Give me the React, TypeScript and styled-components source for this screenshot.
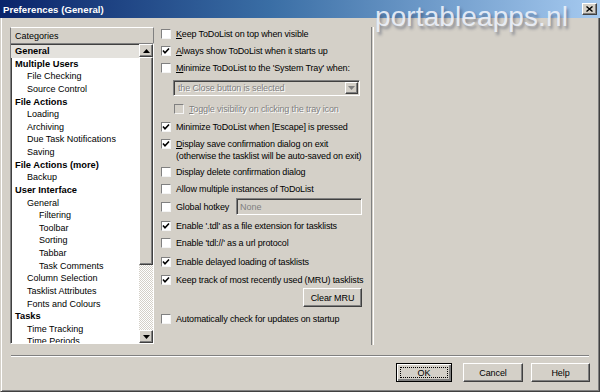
import * as React from 'react';
import styled, { createGlobalStyle, css } from 'styled-components';

const GlobalStyle = createGlobalStyle`
    html, body {
        margin: 0;
        padding: 0;
        background: #d4d0c8;
    }
    body {
        font-family: "Liberation Sans", Arial, sans-serif;
        font-size: 9px;
        color: #000;
    }
`;

const raised = css`
    background: #d4d0c8;
    border-top: 1px solid #ffffff;
    border-left: 1px solid #ffffff;
    border-right: 1px solid #404040;
    border-bottom: 1px solid #404040;
    box-shadow: inset -1px -1px 0 #808080;
`;

const sunken = css`
    border-top: 1px solid #808080;
    border-left: 1px solid #808080;
    border-right: 1px solid #ffffff;
    border-bottom: 1px solid #ffffff;
    box-shadow: inset 1px 1px 0 #404040;
`;

const disabledText = css`
    color: #808080;
    text-shadow: 1px 1px 0 #ffffff;
`;

const Window = styled.div`
    position: relative;
    width: 600px;
    height: 392px;
    display: flex;
    flex-direction: column;
    overflow: hidden;
    background: #d4d0c8;
`;

const TitleBar = styled.div`
    height: 18px;
    display: flex;
    align-items: center;
    justify-content: space-between;
    padding: 0 3px 0 3px;
    background: linear-gradient(to right, #0a246a 0%, #3a6ea5 45%, #a6caf0 100%);
    box-sizing: border-box;
`;

const Title = styled.span`
    color: #ffffff;
    font-weight: bold;
    font-size: 9.6px;
    letter-spacing: 0.05px;
`;

const CloseButton = styled.div`
    ${raised};
    width: 13px;
    height: 10px;
    display: flex;
    align-items: center;
    justify-content: center;
`;

const Watermark = styled.div`
    position: absolute;
    left: 375px;
    top: 1px;
    font-family: "Liberation Sans", Arial, sans-serif;
    font-size: 28px;
    letter-spacing: 0.1px;
    color: rgba(236, 241, 250, 0.92);
    text-shadow: 2px 3px 3px rgba(40, 50, 80, 0.45);
    pointer-events: none;
`;

const Content = styled.div`
    flex: 1;
    display: flex;
    flex-direction: column;
    padding: 9px 7px 0 7px;
    border-left: 1px solid #d4d0c8;
    border-right: 1px solid #404040;
    border-bottom: 1px solid #404040;
    box-shadow: inset 1px 0 0 #ffffff, inset -1px -1px 0 #808080;
    margin: 0;
`;

const Main = styled.div`
    display: flex;
    height: 318px;
`;

const CategoriesColumn = styled.div`
    width: 144px;
    display: flex;
    flex-direction: column;
    margin-left: 2px;
`;

const CategoriesHeader = styled.div`
    height: 16px;
    box-sizing: border-box;
    border-top: 1px solid #ffffff;
    border-left: 1px solid #808080;
    border-right: 1px solid #808080;
    display: flex;
    align-items: center;
    padding-left: 4px;
`;

const CategoryList = styled.div`
    ${sunken};
    height: 301px;
    box-sizing: border-box;
    background: #ffffff;
    display: flex;
    overflow: hidden;
`;

const CategoryItems = styled.div`
    flex: 1;
    padding-top: 1px;
    overflow: hidden;
`;

const CategoryItem = styled.div<{ $level: number; $selected?: boolean }>`
    height: 12.64px;
    line-height: 12.64px;
    padding-left: ${p => 4 + p.$level * 12}px;
    font-weight: ${p => (p.$level === 0 ? 'bold' : 'normal')};
    font-size: ${p => (p.$level === 0 ? '9.3px' : '9px')};
    background: ${p => (p.$selected ? '#e4e2dd' : 'transparent')};
    white-space: nowrap;
`;

const ScrollBar = styled.div`
    width: 14px;
    display: flex;
    flex-direction: column;
    background-color: #eceae6;
    background-image: repeating-conic-gradient(#d4d0c8 0 25%, #ffffff 0 50%);
    background-size: 2px 2px;
`;

const ScrollButton = styled.div`
    ${raised};
    box-sizing: border-box;
    height: 13px;
    display: flex;
    align-items: center;
    justify-content: center;
`;

const ScrollThumb = styled.div`
    ${raised};
    box-sizing: border-box;
    height: 208px;
`;

const ScrollTrack = styled.div`
    flex: 1;
`;

const OptionsPanel = styled.div`
    width: 210px;
    margin-left: 7px;
    display: flex;
    flex-direction: column;
    padding-top: 1px;
`;

const VerticalDivider = styled.div`
    width: 1px;
    border-left: 1px solid #808080;
    border-right: 1px solid #ffffff;
`;

const OptionRow = styled.div<{ $mt: number; $indent?: number }>`
    display: flex;
    align-items: flex-start;
    margin-top: ${p => p.$mt}px;
    margin-left: ${p => p.$indent || 0}px;
    line-height: 12px;
    min-height: 13px;
    white-space: nowrap;
`;

const CheckBox = styled.div<{ $disabled?: boolean }>`
    width: 10px;
    height: 10px;
    box-sizing: border-box;
    margin-top: 1px;
    margin-right: 5px;
    flex-shrink: 0;
    border-top: 1px solid #808080;
    border-left: 1px solid #808080;
    border-right: 1px solid #f4f4f4;
    border-bottom: 1px solid #f4f4f4;
    background: ${p => (p.$disabled ? '#d4d0c8' : '#ffffff')};
    display: flex;
    align-items: center;
    justify-content: center;
`;

const Label = styled.span<{ $disabled?: boolean }>`
    ${p => p.$disabled && disabledText};
    letter-spacing: -0.15px;
`;

const Combo = styled.div`
    ${sunken};
    box-sizing: border-box;
    width: 187px;
    height: 16px;
    margin-left: 12px;
    display: flex;
    align-items: center;
    justify-content: space-between;
    background: #d4d0c8;
    padding: 0 1px 0 4px;
`;

const ComboText = styled.span`
    ${disabledText};
    letter-spacing: -0.15px;
`;

const ComboButton = styled.div`
    ${raised};
    box-sizing: border-box;
    width: 13px;
    height: 12px;
    display: flex;
    align-items: center;
    justify-content: center;
`;

const HotkeyRow = styled.div<{ $mt: number }>`
    display: flex;
    align-items: center;
    margin-top: ${p => p.$mt}px;
    height: 17px;
`;

const HotkeyBox = styled.div`
    ${sunken};
    box-sizing: border-box;
    width: 126px;
    height: 17px;
    margin-left: auto;
    margin-right: 9px;
    background: #d4d0c8;
    display: flex;
    align-items: center;
    padding-left: 3px;
    color: #808080;
`;

const Button = styled.div<{ $w: number; $default?: boolean }>`
    box-sizing: border-box;
    width: ${p => p.$w}px;
    height: 19px;
    display: flex;
    align-items: center;
    justify-content: center;
    background: #d4d0c8;
    border-top: 1px solid #ffffff;
    border-left: 1px solid #ffffff;
    border-right: 1px solid #404040;
    border-bottom: 1px solid #404040;
    box-shadow: inset -1px -1px 0 #808080;
    letter-spacing: -0.1px;
    ${p =>
        p.$default &&
        css`
            border: 1px solid #000000;
            box-shadow: inset 1px 1px 0 #ffffff, inset -2px -2px 0 #808080;
            position: relative;
            &::after {
                content: '';
                position: absolute;
                inset: 3px;
                border: 1px dotted #000000;
            }
        `}
`;

const ClearRow = styled.div<{ $mt: number }>`
    display: flex;
    justify-content: flex-end;
    margin-top: ${p => p.$mt}px;
    padding-right: 9px;
`;

const Separator = styled.div`
    margin: 10px 3px 0 3px;
    height: 0;
    border-top: 1px solid #808080;
    border-bottom: 1px solid #ffffff;
`;

const ButtonBar = styled.div`
    display: flex;
    justify-content: flex-end;
    gap: 8px;
    margin-top: 6px;
    padding-right: 2px;
`;

const Arrow = ({ down, color = '#000' }: { down?: boolean; color?: string }) => (
    <svg width="7" height="4" viewBox="0 0 7 4">
        <polygon points={down ? '0,0 7,0 3.5,4' : '0,4 7,4 3.5,0'} fill={color} />
    </svg>
);

const Check = () => (
    <svg width="8" height="8" viewBox="0 0 8 8">
        <polyline points="1,3.5 3,5.8 7,1.5" fill="none" stroke="#000" strokeWidth="1.6" />
    </svg>
);

const categories: { t: string; l: number; sel?: boolean }[] = [
    { t: 'General', l: 0, sel: true },
    { t: 'Multiple Users', l: 0 },
    { t: 'File Checking', l: 1 },
    { t: 'Source Control', l: 1 },
    { t: 'File Actions', l: 0 },
    { t: 'Loading', l: 1 },
    { t: 'Archiving', l: 1 },
    { t: 'Due Task Notifications', l: 1 },
    { t: 'Saving', l: 1 },
    { t: 'File Actions (more)', l: 0 },
    { t: 'Backup', l: 1 },
    { t: 'User Interface', l: 0 },
    { t: 'General', l: 1 },
    { t: 'Filtering', l: 2 },
    { t: 'Toolbar', l: 2 },
    { t: 'Sorting', l: 2 },
    { t: 'Tabbar', l: 2 },
    { t: 'Task Comments', l: 2 },
    { t: 'Column Selection', l: 1 },
    { t: 'Tasklist Attributes', l: 1 },
    { t: 'Fonts and Colours', l: 1 },
    { t: 'Tasks', l: 0 },
    { t: 'Time Tracking', l: 1 },
    { t: 'Time Periods', l: 1 }
];

const Option = ({
    mt,
    checked,
    disabled,
    indent,
    children
}: {
    mt: number;
    checked?: boolean;
    disabled?: boolean;
    indent?: number;
    children: React.ReactNode;
}) => (
    <OptionRow $mt={mt} $indent={indent}>
        <CheckBox $disabled={disabled}>{checked && <Check />}</CheckBox>
        <Label $disabled={disabled}>{children}</Label>
    </OptionRow>
);

export default function App() {
    return (
        <Window>
            <GlobalStyle />
            <TitleBar>
                <Title>Preferences (General)</Title>
                <CloseButton>
                    <svg width="7" height="6" viewBox="0 0 7 6">
                        <path d="M0.5 0.5 L6.5 5.5 M6.5 0.5 L0.5 5.5" stroke="#000" strokeWidth="1.4" />
                    </svg>
                </CloseButton>
            </TitleBar>
            <Content>
                <Main>
                    <CategoriesColumn>
                        <CategoriesHeader>Categories</CategoriesHeader>
                        <CategoryList>
                            <CategoryItems>
                                {categories.map((c, i) => (
                                    <CategoryItem key={i} $level={c.l} $selected={c.sel}>
                                        {c.t}
                                    </CategoryItem>
                                ))}
                            </CategoryItems>
                            <ScrollBar>
                                <ScrollButton>
                                    <Arrow />
                                </ScrollButton>
                                <ScrollThumb />
                                <ScrollTrack />
                                <ScrollButton>
                                    <Arrow down={true} />
                                </ScrollButton>
                            </ScrollBar>
                        </CategoryList>
                    </CategoriesColumn>
                    <OptionsPanel>
                        <Option mt={0}><u>K</u>eep ToDoList on top when visible</Option>
                        <Option mt={4} checked={true}><u>A</u>lways show ToDoList when it starts up</Option>
                        <Option mt={4}><u>M</u>inimize ToDoList to the 'System Tray' when:</Option>
                        <Combo style={{ marginTop: 5 }}>
                            <ComboText>the Close button is selected</ComboText>
                            <ComboButton>
                                <Arrow down={true} color="#808080" />
                            </ComboButton>
                        </Combo>
                        <Option mt={7} indent={13} disabled={true}>
                            <u>T</u>oggle visibility on clicking the tray icon
                        </Option>
                        <Option mt={5} checked={true}>Minimize ToDoList when [Escape] is pressed</Option>
                        <Option mt={4} checked={true}>
                            <span>
                                <u>D</u>isplay save confirmation dialog on exit
                                <br />
                                (otherwise the tasklist will be auto-saved on exit)
                            </span>
                        </Option>
                        <Option mt={4}>Display delete confirmation dialog</Option>
                        <Option mt={4}>Allow multiple instances of ToDoList</Option>
                        <HotkeyRow $mt={2}>
                            <CheckBox />
                            <Label>Global hotkey</Label>
                            <HotkeyBox>None</HotkeyBox>
                        </HotkeyRow>
                        <Option mt={5} checked={true}>Enable '.tdl' as a file extension for tasklists</Option>
                        <Option mt={4}>Enable 'tdl://' as a url protocol</Option>
                        <Option mt={6} checked={true}>Enable delayed loading of tasklists</Option>
                        <Option mt={5} checked={true}>Keep track of most recently used (MRU) tasklists</Option>
                        <ClearRow $mt={1}>
                            <Button $w={59}>Clear MRU</Button>
                        </ClearRow>
                        <Option mt={6}>Automatically check for updates on startup</Option>
                    </OptionsPanel>
                    <VerticalDivider />
                </Main>
                <Separator />
                <ButtonBar>
                    <Button $w={56} $default={true} style={{ marginRight: 3 }}>OK</Button>
                    <Button $w={60}>Cancel</Button>
                    <Button $w={59}>Help</Button>
                </ButtonBar>
            </Content>
            <Watermark>portableapps.nl</Watermark>
        </Window>
    );
}
